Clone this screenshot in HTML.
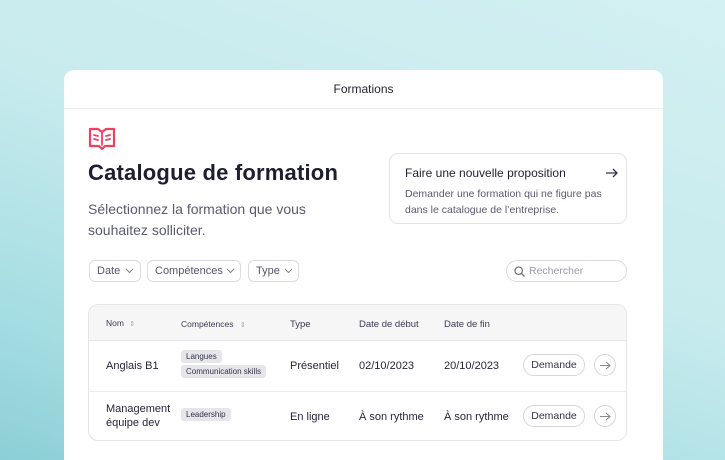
<!DOCTYPE html>
<html><head><meta charset="utf-8"><style>
*{margin:0;padding:0;box-sizing:border-box}
html,body{width:725px;height:460px;overflow:hidden}
body{font-family:"Liberation Sans",sans-serif;position:relative;
background:linear-gradient(200deg,#d3f0f2 0%,#c8ebee 45%,#a4dde2 80%,#8ccfd6 100%);}
.a{position:absolute}
.card{position:absolute;left:64px;top:70px;width:599px;height:390px;background:#fff;border-radius:10px 10px 0 0}
.hdr{position:absolute;left:0;top:0;width:599px;height:39px;border-bottom:1px solid #ececef;text-align:center;line-height:39px;font-size:12px;color:#23232f}
.pill{position:absolute;height:22px;border:1px solid #dcdce0;border-radius:6px;font-size:11px;color:#55556a;line-height:20px;padding-left:7px}
.pill svg{position:absolute;top:7px}
.tag{position:absolute;height:13px;background:#e6e6ea;border-radius:3px;font-size:8px;color:#33334a;line-height:13px;padding:0 5px}
.td{position:absolute;font-size:11px;color:#25253a}
.th{position:absolute;font-size:9px;color:#3a3a4e}
.btn{position:absolute;width:62px;height:22px;border:1px solid #d6d6dc;border-radius:11px;font-size:10.5px;color:#33334a;text-align:center;line-height:20px}
.cir{position:absolute;width:22px;height:22px;border:1px solid #d6d6dc;border-radius:11px}
</style></head><body>
<div class="card">
<div class="hdr">Formations</div>
<svg class="a" style="left:24px;top:57px" width="28" height="24" viewBox="0 0 28 24" fill="none" stroke="#f0405f" stroke-width="2.2" stroke-linejoin="round" stroke-linecap="round"><path d="M2 2h8l4 3 4-3h8v17h-9l-3 3-3-3H2z"/><path d="M6 8l4 1M6 12l4 1M18 9l4-1M18 13l4-1M14 6v12" stroke-width="1.8"/></svg>
<div class="a" style="left:24px;top:90px;font-size:22px;font-weight:bold;color:#1e1e30;letter-spacing:0.2px">Catalogue de formation</div>
<div class="a" style="left:24px;top:129px;font-size:14px;color:#5a5a6e;line-height:21px;width:260px">Sélectionnez la formation que vous souhaitez solliciter.</div>
<div class="a" style="left:325px;top:83px;width:238px;height:71px;border:1px solid #e4e4e8;border-radius:9px">
<div class="a" style="left:15px;top:12px;font-size:12px;color:#23232f">Faire une nouvelle proposition</div>
<svg class="a" style="left:216px;top:14px" width="12" height="10" viewBox="0 0 12 10" fill="none" stroke="#33334a" stroke-width="1.3"><path d="M0 5h11M7 1l4 4-4 4"/></svg>
<div class="a" style="left:15px;top:32px;font-size:10.5px;color:#5a5a6e;line-height:16px;width:210px">Demander une formation qui ne figure pas dans le catalogue de l’entreprise.</div>
</div>
<div class="pill" style="left:25px;top:190px;width:52px">Date<svg style="left:35px" width="9" height="6" viewBox="0 0 9 6" fill="none" stroke="#888" stroke-width="1.1"><path d="M1 1l3.5 3.5L8 1"/></svg></div>
<div class="pill" style="left:83px;top:190px;width:94px">Compétences<svg style="left:78px" width="9" height="6" viewBox="0 0 9 6" fill="none" stroke="#888" stroke-width="1.1"><path d="M1 1l3.5 3.5L8 1"/></svg></div>
<div class="pill" style="left:184px;top:190px;width:51px">Type<svg style="left:35px" width="9" height="6" viewBox="0 0 9 6" fill="none" stroke="#888" stroke-width="1.1"><path d="M1 1l3.5 3.5L8 1"/></svg></div>
<div class="a" style="left:442px;top:190px;width:121px;height:22px;border:1px solid #dcdce0;border-radius:11px;font-size:10.5px;color:#9a9aa8;line-height:20px;padding-left:22px">Rechercher
<svg class="a" style="left:7px;top:5px" width="11" height="11" viewBox="0 0 11 11" fill="none" stroke="#777" stroke-width="1.3"><circle cx="4.7" cy="4.7" r="3.7"/><path d="M7.5 7.5l3 3"/></svg></div>
<div class="a" style="left:24px;top:234px;width:539px;height:137px;border:1px solid #e6e6ea;border-radius:10px;overflow:hidden">
<div class="a" style="left:0;top:0;width:539px;height:36px;background:#f6f6f7;border-bottom:1px solid #e6e6ea"></div>
<div class="a" style="left:0;top:86px;width:539px;height:1px;background:#ececef"></div>
</div>
<div class="th" style="left:42px;top:248px;font-size:8.5px">Nom <span style="color:#aaa;font-size:7px;margin-left:3px">⇕</span></div>
<div class="th" style="left:117px;top:249px;font-size:8.5px">Compétences <span style="color:#aaa;font-size:7px;margin-left:4px">⇕</span></div>
<div class="th" style="left:226px;top:249px;font-size:9.5px">Type</div>
<div class="th" style="left:295px;top:249px;font-size:9.5px">Date de début</div>
<div class="th" style="left:380px;top:249px;font-size:9.5px">Date de fin</div>
<div class="td" style="left:42px;top:290px">Anglais B1</div>
<div class="tag" style="left:117px;top:280px">Langues</div>
<div class="tag" style="left:117px;top:295px">Communication skills</div>
<div class="td" style="left:226px;top:290px">Présentiel</div>
<div class="td" style="left:295px;top:290px">02/10/2023</div>
<div class="td" style="left:380px;top:290px">20/10/2023</div>
<div class="btn" style="left:459px;top:284px">Demande</div>
<div class="cir" style="left:530px;top:284px"><svg class="a" style="left:5px;top:6px" width="11" height="9" viewBox="0 0 11 9" fill="none" stroke="#888" stroke-width="1.1"><path d="M0 4.5h10M6 1l4 3.5L6 8"/></svg></div>
<div class="td" style="left:42px;top:332px;line-height:14px">Management<br>équipe dev</div>
<div class="tag" style="left:117px;top:338px">Leadership</div>
<div class="td" style="left:226px;top:341px">En ligne</div>
<div class="td" style="left:295px;top:341px">À son rythme</div>
<div class="td" style="left:380px;top:341px">À son rythme</div>
<div class="btn" style="left:459px;top:335px">Demande</div>
<div class="cir" style="left:530px;top:335px"><svg class="a" style="left:5px;top:6px" width="11" height="9" viewBox="0 0 11 9" fill="none" stroke="#888" stroke-width="1.1"><path d="M0 4.5h10M6 1l4 3.5L6 8"/></svg></div>
</div>
</body></html>
